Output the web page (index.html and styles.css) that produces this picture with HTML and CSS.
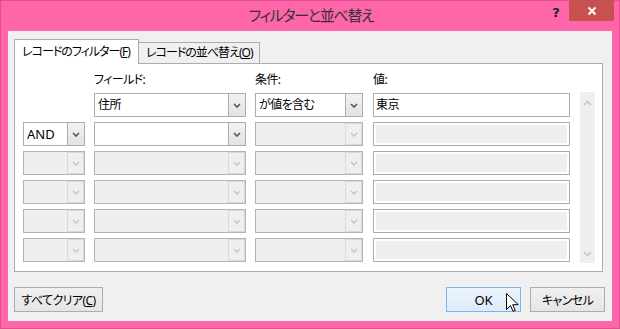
FILE: index.html
```html
<!DOCTYPE html>
<html lang="ja">
<head>
    <meta charset="UTF-8">
    <title>フィルターと並べ替え</title>
    <link rel="stylesheet" href="styles.css">
</head>
<body>
    <div class="window">
        <div class="titlebar">
            <div class="title">フィルターと並べ替え</div>
            <div class="caption-buttons">
                <span class="help">?</span>
                <span class="close">
                    <svg width="10" height="10" viewBox="0 0 10 10"><path d="M1.5 1.5l7 7M8.5 1.5l-7 7" stroke="#fff" stroke-width="2"/></svg>
                </span>
            </div>
        </div>
        <div class="client">
            <div class="tabs">
                <div class="tab active">レコードのフィルター(<u>F</u>)</div>
                <div class="tab">レコードの並べ替え(<u>O</u>)</div>
            </div>
            <div class="panel">
                <div class="filter-grid">
                    <div class="label col-field">フィールド:</div>
                    <div class="label col-cond">条件:</div>
                    <div class="label col-value">値:</div>

                    <div class="combo col-field">
                        <span class="combo-text">住所</span>
                        <span class="combo-btn"><svg width="8" height="5" viewBox="0 0 8 5"><path d="M1 1l3 3 3-3" fill="none" stroke="#555" stroke-width="1.6"/></svg></span>
                    </div>
                    <div class="combo col-cond">
                        <span class="combo-text">が値を含む</span>
                        <span class="combo-btn"><svg width="8" height="5" viewBox="0 0 8 5"><path d="M1 1l3 3 3-3" fill="none" stroke="#555" stroke-width="1.6"/></svg></span>
                    </div>
                    <div class="textbox col-value">東京</div>

                    <div class="scrollbar">
                        <svg width="9" height="6" viewBox="0 0 9 6"><path d="M1 5l3.5-3.5 3.5 3.5" fill="none" stroke="#c6c6c6" stroke-width="1.6"/></svg>
                        <svg width="9" height="6" viewBox="0 0 9 6"><path d="M1 1l3.5 3.5 3.5-3.5" fill="none" stroke="#c6c6c6" stroke-width="1.6"/></svg>
                    </div>

                    <div class="combo col-op">
                        <span class="combo-text latin">AND</span>
                        <span class="combo-btn"><svg width="8" height="5" viewBox="0 0 8 5"><path d="M1 1l3 3 3-3" fill="none" stroke="#555" stroke-width="1.6"/></svg></span>
                    </div>
                    <div class="combo col-field">
                        <span class="combo-text"></span>
                        <span class="combo-btn"><svg width="8" height="5" viewBox="0 0 8 5"><path d="M1 1l3 3 3-3" fill="none" stroke="#555" stroke-width="1.6"/></svg></span>
                    </div>
                    <div class="combo disabled col-cond">
                        <span class="combo-text"></span>
                        <span class="combo-btn"><svg width="8" height="5" viewBox="0 0 8 5"><path d="M1 1l3 3 3-3" fill="none" stroke="#c8c8c8" stroke-width="1.6"/></svg></span>
                    </div>
                    <div class="textbox disabled col-value"></div>

                    <div class="combo disabled col-op"><span class="combo-text"></span><span class="combo-btn"><svg width="8" height="5" viewBox="0 0 8 5"><path d="M1 1l3 3 3-3" fill="none" stroke="#c8c8c8" stroke-width="1.6"/></svg></span></div>
                    <div class="combo disabled col-field"><span class="combo-text"></span><span class="combo-btn"><svg width="8" height="5" viewBox="0 0 8 5"><path d="M1 1l3 3 3-3" fill="none" stroke="#c8c8c8" stroke-width="1.6"/></svg></span></div>
                    <div class="combo disabled col-cond"><span class="combo-text"></span><span class="combo-btn"><svg width="8" height="5" viewBox="0 0 8 5"><path d="M1 1l3 3 3-3" fill="none" stroke="#c8c8c8" stroke-width="1.6"/></svg></span></div>
                    <div class="textbox disabled col-value"></div>

                    <div class="combo disabled col-op"><span class="combo-text"></span><span class="combo-btn"><svg width="8" height="5" viewBox="0 0 8 5"><path d="M1 1l3 3 3-3" fill="none" stroke="#c8c8c8" stroke-width="1.6"/></svg></span></div>
                    <div class="combo disabled col-field"><span class="combo-text"></span><span class="combo-btn"><svg width="8" height="5" viewBox="0 0 8 5"><path d="M1 1l3 3 3-3" fill="none" stroke="#c8c8c8" stroke-width="1.6"/></svg></span></div>
                    <div class="combo disabled col-cond"><span class="combo-text"></span><span class="combo-btn"><svg width="8" height="5" viewBox="0 0 8 5"><path d="M1 1l3 3 3-3" fill="none" stroke="#c8c8c8" stroke-width="1.6"/></svg></span></div>
                    <div class="textbox disabled col-value"></div>

                    <div class="combo disabled col-op"><span class="combo-text"></span><span class="combo-btn"><svg width="8" height="5" viewBox="0 0 8 5"><path d="M1 1l3 3 3-3" fill="none" stroke="#c8c8c8" stroke-width="1.6"/></svg></span></div>
                    <div class="combo disabled col-field"><span class="combo-text"></span><span class="combo-btn"><svg width="8" height="5" viewBox="0 0 8 5"><path d="M1 1l3 3 3-3" fill="none" stroke="#c8c8c8" stroke-width="1.6"/></svg></span></div>
                    <div class="combo disabled col-cond"><span class="combo-text"></span><span class="combo-btn"><svg width="8" height="5" viewBox="0 0 8 5"><path d="M1 1l3 3 3-3" fill="none" stroke="#c8c8c8" stroke-width="1.6"/></svg></span></div>
                    <div class="textbox disabled col-value"></div>

                    <div class="combo disabled col-op"><span class="combo-text"></span><span class="combo-btn"><svg width="8" height="5" viewBox="0 0 8 5"><path d="M1 1l3 3 3-3" fill="none" stroke="#c8c8c8" stroke-width="1.6"/></svg></span></div>
                    <div class="combo disabled col-field"><span class="combo-text"></span><span class="combo-btn"><svg width="8" height="5" viewBox="0 0 8 5"><path d="M1 1l3 3 3-3" fill="none" stroke="#c8c8c8" stroke-width="1.6"/></svg></span></div>
                    <div class="combo disabled col-cond"><span class="combo-text"></span><span class="combo-btn"><svg width="8" height="5" viewBox="0 0 8 5"><path d="M1 1l3 3 3-3" fill="none" stroke="#c8c8c8" stroke-width="1.6"/></svg></span></div>
                    <div class="textbox disabled col-value"></div>
                </div>
            </div>
            <div class="footer">
                <button class="btn btn-clear">すべてクリア(<u>C</u>)</button>
                <div class="footer-right">
                    <button class="btn btn-ok">OK
                        <svg class="cursor" width="13" height="20" viewBox="0 0 13 20"><path d="M0.5 0.5v16l4-4 2.6 5.8 2.2-1-2.6-5.6h5.6z" fill="#fff" stroke="#000" stroke-width="1" stroke-linejoin="round"/></svg>
                    </button>
                    <button class="btn">キャンセル</button>
                </div>
            </div>
        </div>
    </div>
</body>
</html>
```

FILE: styles.css
```css
:root {
    --frame: #ff65a9;
    --frame-edge: #e0508f;
    --client: #f0f0f0;
    --border: #acacac;
    --ui-font: "Noto Sans", "Noto Sans CJK JP", sans-serif;
}
body {
    margin: 0;
    background: var(--frame);
    font-family: var(--ui-font);
    font-size: 12px;
    color: #000;
    font-feature-settings: "palt";
    letter-spacing: -0.6px;
}
.window {
    width: 620px;
    height: 329px;
    box-sizing: border-box;
    border: 1px solid var(--frame-edge);
    background: var(--frame);
}
.titlebar {
    height: 30px;
    display: grid;
    grid-template-columns: 1fr auto 1fr;
    align-items: start;
}
.title {
    grid-column: 2;
    font-size: 15px;
    letter-spacing: -1.3px;
    line-height: 28px;
    color: #333;
    padding-left: 2px;
}
.caption-buttons {
    grid-column: 3;
    justify-self: end;
    display: flex;
    align-items: flex-start;
    margin-right: 5px;
    margin-top: -1px;
}
.help {
    width: 26px;
    text-align: center;
    font-family: "DejaVu Sans", sans-serif;
    font-weight: bold;
    font-size: 13px;
    letter-spacing: 0;
    line-height: 26px;
    color: #222;
}
.close {
    width: 45px;
    height: 21px;
    background: #c75050;
    display: flex;
    align-items: center;
    justify-content: center;
}
.client {
    margin: 0 7px 7px;
    background: var(--client);
    padding: 8px 9px 9px 6px;
}
.tabs {
    display: flex;
    align-items: flex-end;
    height: 25px;
    margin-bottom: -1px;
}
.tab {
    box-sizing: border-box;
    height: 22px;
    border: 1px solid var(--border);
    background: var(--client);
    padding: 0 0 0 7px;
    line-height: 20px;
    letter-spacing: -1px;
    margin-left: -1px;
    white-space: nowrap;
    overflow: hidden;
}
.tab.active {
    height: 25px;
    width: 125px;
    margin-left: 0;
    border-bottom: none;
    background: #fff;
    line-height: 24px;
    position: relative;
    z-index: 1;
}
.tab:nth-child(2) {
    width: 122px;
}
.panel {
    box-sizing: border-box;
    border: 1px solid var(--border);
    background: #fff;
    padding: 4px 0 9px 8px;
}
.filter-grid {
    display: grid;
    grid-template-columns: 62px 152px 108px 198px 16px;
    column-gap: 9px;
    grid-template-rows: 20px repeat(6, 24px);
    row-gap: 5px;
}
.filter-grid > .col-value { margin-left: 1px; }
.filter-grid > .scrollbar { margin-left: 1px; }
.col-op { grid-column: 1; }
.col-field { grid-column: 2; }
.col-cond { grid-column: 3; }
.col-value { grid-column: 4; }
.label {
    grid-row: 1;
    align-self: end;
    line-height: 16px;
}
.combo {
    box-sizing: border-box;
    height: 24px;
    display: flex;
    border: 1px solid var(--border);
    background: #fff;
}
.combo-text {
    flex: 1;
    padding-left: 3px;
    line-height: 22px;
    white-space: nowrap;
}
.combo-text.latin {
    font-size: 13px;
    letter-spacing: 0;
}
.combo-btn {
    box-sizing: border-box;
    width: 18px;
    height: 24px;
    margin: -1px -1px -1px 0;
    border: 1px solid var(--border);
    background: linear-gradient(#f2f2f2, #e3e3e3);
    display: flex;
    align-items: center;
    justify-content: center;
}
.combo.disabled {
    background: #efefef;
    border-color: #b4b4b4;
}
.combo.disabled .combo-btn {
    width: 17px;
    height: 22px;
    margin: 0;
    border-color: #dadada;
    background: #efefef;
}
.textbox {
    box-sizing: border-box;
    height: 24px;
    border: 1px solid var(--border);
    background: #fff;
    padding-left: 2px;
    line-height: 22px;
}
.textbox.disabled {
    background: #efefef;
    box-shadow: inset 0 0 0 2px #fff;
}
.scrollbar {
    grid-column: 5;
    grid-row: 2 / 8;
    margin: -1px 0;
    background: #efefef;
    display: flex;
    flex-direction: column;
    justify-content: space-between;
    align-items: center;
    padding: 8px 0 6px;
}
.footer {
    display: flex;
    justify-content: space-between;
    margin: 15px -2px 0 0;
}
.footer-right {
    display: flex;
    gap: 9px;
}
.btn {
    box-sizing: border-box;
    height: 25px;
    width: 75px;
    border: 1px solid var(--border);
    background: linear-gradient(#f0f0f0, #e5e5e5);
    font-family: var(--ui-font);
    font-feature-settings: "palt";
    font-size: 12px;
    letter-spacing: -0.6px;
    color: #000;
    padding: 0;
    position: relative;
}
.btn-clear {
    width: 89px;
}
.btn-ok {
    border-color: #7eb4ea;
    background: linear-gradient(#ecf4fc, #dcecfc);
    font-size: 13px;
    letter-spacing: 0;
}
.cursor {
    position: absolute;
    left: 59px;
    top: 5px;
}
```
